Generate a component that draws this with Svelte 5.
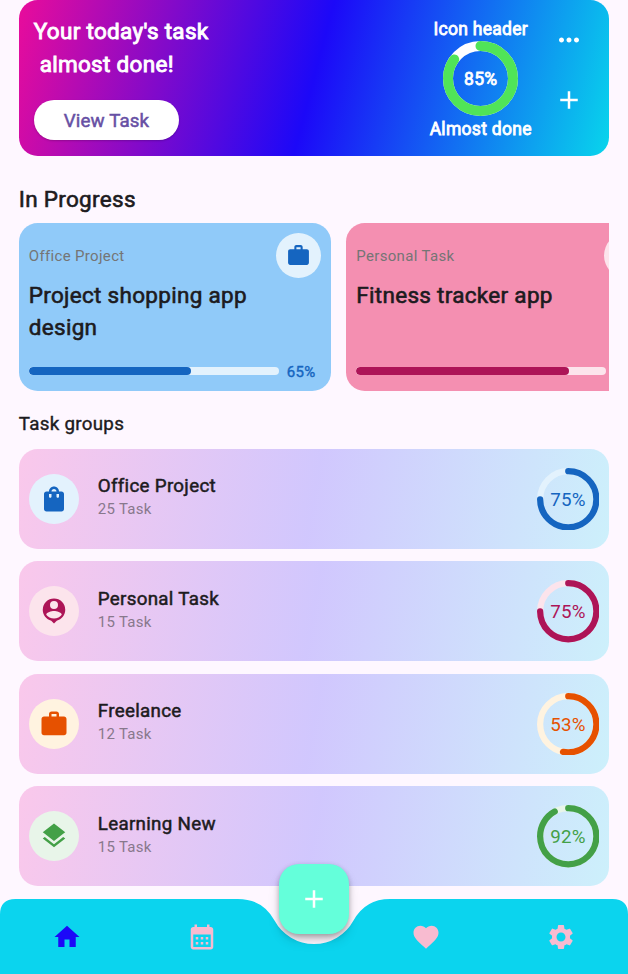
<script>
  const icons = {
    work: 'M20 6h-4V4c0-1.11-.89-2-2-2h-4c-1.11 0-2 .89-2 2v2H4c-1.11 0-1.99.89-1.99 2L2 19c0 1.11.89 2 2 2h16c1.11 0 2-.89 2-2V8c0-1.11-.89-2-2-2zm-6 0h-4V4h4v2z',
    bag: 'M18 6h-2c0-2.21-1.79-4-4-4S8 3.79 8 6H6c-1.1 0-2 .9-2 2v12c0 1.1.9 2 2 2h12c1.1 0 2-.9 2-2V8c0-1.1-.9-2-2-2zm-8 4c0 .55-.45 1-1 1s-1-.45-1-1V8h2v2zm2-6c1.1 0 2 .9 2 2h-4c0-1.1.9-2 2-2zm4 6c0 .55-.45 1-1 1s-1-.45-1-1V8h2v2z',
    person: 'M12 2a9 9 0 0 0-9 9c0 4.2 2.9 7.7 6.8 8.7L12 22l2.2-2.3C18.1 18.7 21 15.2 21 11a9 9 0 0 0-9-9zm0 2a3.2 3.2 0 1 1 0 6.4a3.2 3.2 0 0 1 0-6.4zM12 18c-2.5 0-4.9-1.2-6.2-3.1C6 12.9 10 11.9 12 11.9s6 1 6.2 3C16.9 16.8 14.5 18 12 18z',
    layers: 'M11.99 18.54l-7.37-5.73L3 14.07l9 7 9-7-1.63-1.27-7.38 5.74zM12 16l7.36-5.73L21 9l-9-7-9 7 1.63 1.27L12 16z',
    more: 'M6 10c-1.1 0-2 .9-2 2s.9 2 2 2 2-.9 2-2-.9-2-2-2zm12 0c-1.1 0-2 .9-2 2s.9 2 2 2 2-.9 2-2-.9-2-2-2zm-6 0c-1.1 0-2 .9-2 2s.9 2 2 2 2-.9 2-2-.9-2-2-2z',
    add: 'M19 13h-6v6h-2v-6H5v-2h6V5h2v6h6v2z',
    home: 'M10 20v-6h4v6h5v-8h3L12 3 2 12h3v8z',
    calendar: 'M19 4h-1V2h-2v2H8V2H6v2H5c-1.11 0-1.99.9-1.99 2L3 20c0 1.1.89 2 2 2h14c1.1 0 2-.9 2-2V6c0-1.1-.9-2-2-2zm0 16H5V10h14v10zM9 14H7v-2h2v2zm4 0h-2v-2h2v2zm4 0h-2v-2h2v2zm-8 4H7v-2h2v2zm4 0h-2v-2h2v2zm4 0h-2v-2h2v2z',
    heart: 'M12 21.35l-1.45-1.32C5.4 15.36 2 12.28 2 8.5 2 5.42 4.42 3 7.5 3c1.74 0 3.41.81 4.5 2.09C13.09 3.81 14.76 3 16.5 3 19.58 3 22 5.42 22 8.5c0 3.78-3.4 6.86-8.55 11.54L12 21.35z',
    settings: 'M19.14 12.94c.04-.3.06-.61.06-.94 0-.32-.02-.64-.07-.94l2.03-1.58c.18-.14.23-.41.12-.61l-1.92-3.32c-.12-.22-.37-.29-.59-.22l-2.39.96c-.5-.38-1.03-.7-1.62-.94l-.36-2.54c-.04-.24-.24-.41-.48-.41h-3.84c-.24 0-.43.17-.47.41l-.36 2.54c-.59.24-1.13.57-1.62.94l-2.39-.96c-.22-.08-.47 0-.59.22L2.74 8.87c-.12.21-.08.47.12.61l2.03 1.58c-.05.3-.09.63-.09.94s.02.64.07.94l-2.03 1.58c-.18.14-.23.41-.12.61l1.92 3.32c.12.22.37.29.59.22l2.39-.96c.5.38 1.03.7 1.62.94l.36 2.54c.05.24.24.41.48.41h3.84c.24 0 .44-.17.47-.41l.36-2.54c.59-.24 1.13-.56 1.62-.94l2.39.96c.22.08.47 0 .59-.22l1.92-3.32c.12-.22.07-.47-.12-.61l-2.01-1.58zM12 15.6c-1.98 0-3.6-1.62-3.6-3.6s1.62-3.6 3.6-3.6 3.6 1.62 3.6 3.6-1.62 3.6-3.6 3.6z'
  };

  const projects = [
    { group: 'Office Project', title: 'Project shopping app design', value: 65, showValue: true, bg: '#90caf9', tint: '#e3f2fd', color: '#1565c0' },
    { group: 'Personal Task', title: 'Fitness tracker app', value: 85, showValue: false, bg: '#f48fb1', tint: '#fce4ec', color: '#ad1457' }
  ];

  const groups = [
    { name: 'Office Project', count: 25, value: 75, icon: 'bag', tint: '#e3f2fd', color: '#1565c0' },
    { name: 'Personal Task', count: 15, value: 75, icon: 'person', tint: '#fce4ec', color: '#ad1457' },
    { name: 'Freelance', count: 12, value: 53, icon: 'work', tint: '#fff3e0', color: '#e65100' },
    { name: 'Learning New', count: 15, value: 92, icon: 'layers', tint: '#e8f5e9', color: '#43a047' }
  ];
</script>

{#snippet icon(name, size)}
  <svg class="icon" width={size} height={size} viewBox="0 0 24 24"><path fill="currentColor" fill-rule="evenodd" d={icons[name]} /></svg>
{/snippet}

{#snippet ring(size, stroke, value, color, track)}
  <svg class="icon" width={size} height={size} viewBox="0 0 {size} {size}" fill="none" stroke-width={stroke}>
    <circle cx={size / 2} cy={size / 2} r={(size - stroke) / 2} stroke={track} />
    <circle cx={size / 2} cy={size / 2} r={(size - stroke) / 2} stroke={color} pathLength="100"
      stroke-dasharray="{value} 100" stroke-linecap="round" transform="rotate(-90 {size / 2} {size / 2})" />
  </svg>
{/snippet}

<div class="screen">
  <header class="hero">
    <div class="intro">
      <p class="headline">Your today's task<br />&nbsp;almost done!</p>
      <button class="view">View Task</button>
    </div>
    <div class="summary">
      <span class="cap">Icon header</span>
      <div class="dial">
        {@render ring(75, 10, 85, '#50e458', '#fff')}
        <b class="pct">85%</b>
      </div>
      <span class="cap">Almost done</span>
    </div>
    <div class="actions">
      {@render icon('more', 30)}
      {@render icon('add', 30)}
    </div>
  </header>

  <h2 class="h-progress">In Progress</h2>
  <div class="projects">
    {#each projects as p}
      <article class="project" style="background: {p.bg}; --c: {p.color}; --t: {p.tint}">
        <div class="top">
          <span class="label">{p.group}</span>
          <span class="badge">{@render icon('work', 25)}</span>
        </div>
        <h3>{p.title}</h3>
        <div class="progress">
          <div class="bar"><div class="fill" style="width: {p.value}%"></div></div>
          {#if p.showValue}<span class="barpct">{p.value}%</span>{/if}
        </div>
      </article>
    {/each}
  </div>

  <h2 class="h-groups">Task groups</h2>
  <div class="groups">
    {#each groups as g}
      <article class="group" style="--c: {g.color}; --t: {g.tint}">
        <span class="badge big">{@render icon(g.icon, 30)}</span>
        <div class="info">
          <h4>{g.name}</h4>
          <span class="count">{g.count} Task</span>
        </div>
        <div class="dial">
          {@render ring(62.5, 6.25, g.value, g.color, g.tint)}
          <span class="pct light">{g.value}%</span>
        </div>
      </article>
    {/each}
  </div>

  <nav class="nav">
    <svg class="shape" width="628" height="75" viewBox="0 0 628 75">
      <path fill="#0bd4ee" d="M0 75V15.5Q0 0 15.5 0H237.75Q262.75 0 274.5 21.6A45 45 0 0 0 353.5 21.6Q365.25 0 390.25 0H612.5Q628 0 628 15.5V75z" />
    </svg>
    <div class="tabs">
      <span class="tab active">{@render icon('home', 30)}</span>
      <span class="tab">{@render icon('calendar', 30)}</span>
      <span class="gap"></span>
      <span class="tab">{@render icon('heart', 30)}</span>
      <span class="tab">{@render icon('settings', 30)}</span>
    </div>
    <button class="fab">{@render icon('add', 30)}</button>
  </nav>
</div>

<style>
  :global(body) { background: #fef7ff; overflow: hidden; }
  .screen {
    position: relative;
    box-sizing: border-box;
    width: 628px;
    height: 974px;
    padding: 0.25px 18.75px 0;
    overflow: hidden;
    background: #fef7ff;
    color: #1d1b20;
    font-family: Roboto, sans-serif;
    font-weight: 400;
  }
  h2, h3, h4, p { margin: 0; font-weight: 400; }
  button { border: 0; padding: 0; font-family: inherit; }
  .icon { display: block; flex: none; }

  .hero {
    display: flex;
    box-sizing: border-box;
    height: 156px;
    padding: 0 25px 0 15px;
    border-radius: 18.75px;
    background: linear-gradient(104.8deg, #e90c9b, #1c08f8 50%, #08d5ec);
    color: #fff;
  }
  .intro { flex: 1; padding-top: 15px; }
  .headline {
    height: 84.5px;
    font-size: 22.5px;
    line-height: 32.5px;
    letter-spacing: 0.3px;
    -webkit-text-stroke: 0.9px currentColor;
  }
  .view {
    width: 145.5px;
    height: 40px;
    padding-top: 2px;
    border-radius: 20px;
    background: #fff;
    color: #6750a4;
    font-size: 18.75px;
    letter-spacing: 0.12px;
    -webkit-text-stroke: 0.5px currentColor;
    box-shadow: 0 1px 2px rgb(0 0 0 / 0.2);
  }
  .summary {
    display: flex;
    flex-direction: column;
    align-items: center;
    width: 120px;
    padding-top: 15.5px;
    font-size: 17.5px;
    letter-spacing: 0.3px;
    -webkit-text-stroke: 0.8px currentColor;
  }
  .cap { height: 25px; line-height: 27px; }
  .actions {
    display: flex;
    flex-direction: column;
    gap: 30px;
    padding: 25px 0 0 13.5px;
  }
  .dial { display: grid; place-items: center; }
  .dial > :global(*) { grid-area: 1 / 1; }
  .pct { padding-top: 2px; font-weight: 400; font-size: 17.5px; }

  .h-progress {
    padding-top: 26.25px;
    height: 40px;
    font-size: 22.5px;
    line-height: 33px;
    letter-spacing: 0.3px;
    -webkit-text-stroke: 0.6px currentColor;
  }
  .projects { display: flex; gap: 15px; overflow: hidden; }
  .project {
    flex: none;
    display: flex;
    flex-direction: column;
    box-sizing: border-box;
    width: 312.5px;
    height: 168.75px;
    padding: 10px;
    border-radius: 18.75px;
  }
  .top { display: flex; justify-content: space-between; align-items: center; }
  .label { padding-top: 2px; color: #757575; font-size: 15px; letter-spacing: 0.33px; }
  .badge {
    display: grid;
    place-items: center;
    width: 45px;
    height: 45px;
    border-radius: 50%;
    background: var(--t);
    color: var(--c);
  }
  .badge.big { width: 50px; height: 50px; }
  h3 {
    height: 85px;
    padding-top: 1px;
    font-size: 22.5px;
    line-height: 32px;
    letter-spacing: 0.3px;
    -webkit-text-stroke: 0.6px currentColor;
  }
  .progress { display: flex; align-items: center; gap: 8px; height: 15px; }
  .bar { width: 250px; height: 7.5px; border-radius: 4px; background: var(--t); overflow: hidden; }
  .fill { height: 100%; border-radius: 4px; background: var(--c); }
  .barpct {
    padding-top: 2px;
    color: var(--c);
    font-size: 15px;
    letter-spacing: 0.3px;
    -webkit-text-stroke: 0.4px currentColor;
  }

  .h-groups {
    height: 57.5px;
    font-size: 18.75px;
    line-height: 66px;
    letter-spacing: 0.3px;
    -webkit-text-stroke: 0.4px currentColor;
  }
  .groups { display: flex; flex-direction: column; gap: 12.5px; }
  .group {
    display: flex;
    align-items: center;
    box-sizing: border-box;
    height: 100px;
    padding: 0 10px;
    border-radius: 18.75px;
    background: linear-gradient(99.6deg, rgb(233 12 155 / 0.2), rgb(28 8 248 / 0.2) 50%, rgb(8 213 236 / 0.2));
  }
  .info { flex: 1; padding: 0 0 4.5px 19px; }
  h4 {
    font-size: 18.75px;
    line-height: 26px;
    letter-spacing: 0.3px;
    -webkit-text-stroke: 0.5px currentColor;
  }
  .count { display: block; color: #88788c; font-size: 15px; line-height: 21px; letter-spacing: 0.3px; }
  .pct.light { color: var(--c); font-size: 18.75px; letter-spacing: 0.3px; }

  .nav { position: absolute; left: 0; top: 899px; width: 628px; height: 75px; }
  .shape { position: absolute; inset: 0; }
  .tabs { position: relative; display: flex; height: 76.5px; align-items: center; }
  .tab { flex: 1; display: grid; place-items: center; color: #f8bbd0; }
  .tab.active { color: #1c08f8; }
  .gap { width: 90px; }
  .fab {
    position: absolute;
    left: 279px;
    top: -35px;
    display: grid;
    place-items: center;
    width: 70px;
    height: 70px;
    border-radius: 20px;
    background: #64ffda;
    color: #fff;
    box-shadow: 0 4px 6px -1px rgb(0 0 0 / 0.22), 0 7px 12px rgb(0 0 0 / 0.13), 0 1px 5px rgb(0 0 0 / 0.12);
  }
</style>
